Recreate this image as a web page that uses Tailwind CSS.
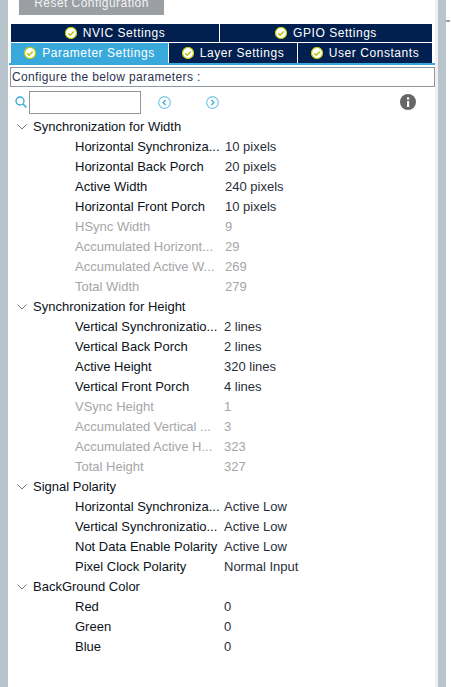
<!DOCTYPE html>
<html lang="en">
<head>
  <meta charset="UTF-8" />
  <title>Parameter Settings</title>
  <script src="https://cdn.jsdelivr.net/npm/@tailwindcss/browser@4"></script>
</head>
<body class="bg-white font-['Liberation_Sans',Arial,sans-serif] text-[13px] text-[#0b1220] overflow-hidden">
<div class="relative w-[452px] h-[687px] overflow-hidden flex">
  <div class="w-2 bg-[#b8c4cb] shrink-0"></div>
  <div class="w-[427px] shrink-0">

    <!-- reset -->
    <div class="ml-[11px] w-[145px] h-[15px] bg-[#9a9fa4] text-[#f2f3f4] text-[12px] tracking-[0.45px] leading-[6px] text-center">Reset Configuration</div>

    <!-- tabs -->
    <div class="mt-[9px] ml-[3px] w-[421px] flex gap-px h-[18px] text-white text-[12px] tracking-[0.55px]">
      <div class="w-[208px] bg-[#012050] flex items-center justify-center gap-[6px]">
        <svg class="w-3 h-3" viewBox="0 0 12 12"><circle cx="6" cy="6" r="5.5" fill="#fff" stroke="#c3cc12" stroke-width="1.2"/><path d="M3.2 6.2l2 2 3.6-3.8" fill="none" stroke="#b8c214" stroke-width="1.5"/></svg>
        <span>NVIC Settings</span>
      </div>
      <div class="flex-1 bg-[#012050] flex items-center justify-center gap-[6px]">
        <svg class="w-3 h-3" viewBox="0 0 12 12"><circle cx="6" cy="6" r="5.5" fill="#fff" stroke="#c3cc12" stroke-width="1.2"/><path d="M3.2 6.2l2 2 3.6-3.8" fill="none" stroke="#b8c214" stroke-width="1.5"/></svg>
        <span>GPIO Settings</span>
      </div>
    </div>
    <div class="mt-px ml-[3px] w-[421px] flex gap-px h-5 text-white text-[12px] tracking-[0.55px]">
      <div class="w-[157px] bg-[#39a9dc] flex items-center justify-center gap-[6px]">
        <svg class="w-3 h-3" viewBox="0 0 12 12"><circle cx="6" cy="6" r="5.5" fill="#fff" stroke="#c3cc12" stroke-width="1.2"/><path d="M3.2 6.2l2 2 3.6-3.8" fill="none" stroke="#b8c214" stroke-width="1.5"/></svg>
        <span>Parameter Settings</span>
      </div>
      <div class="w-[128px] bg-[#012050] flex items-center justify-center gap-[6px]">
        <svg class="w-3 h-3" viewBox="0 0 12 12"><circle cx="6" cy="6" r="5.5" fill="#fff" stroke="#c3cc12" stroke-width="1.2"/><path d="M3.2 6.2l2 2 3.6-3.8" fill="none" stroke="#b8c214" stroke-width="1.5"/></svg>
        <span>Layer Settings</span>
      </div>
      <div class="flex-1 bg-[#012050] flex items-center justify-center gap-[6px]">
        <svg class="w-3 h-3" viewBox="0 0 12 12"><circle cx="6" cy="6" r="5.5" fill="#fff" stroke="#c3cc12" stroke-width="1.2"/><path d="M3.2 6.2l2 2 3.6-3.8" fill="none" stroke="#b8c214" stroke-width="1.5"/></svg>
        <span>User Constants</span>
      </div>
    </div>
    <div class="ml-px w-[428px] h-0.5 bg-[#39a9dc]"></div>

    <!-- caption -->
    <div class="mt-0.5 ml-0.5 w-[425px] h-5 border border-[#8f989e] pl-px text-[12px] tracking-[0.35px] leading-[19px] text-[#2b3350]">Configure the below parameters :</div>

    <!-- search row -->
    <div class="relative h-[23px] mt-[4px] flex items-center">
      <svg class="ml-[7px] w-3 h-3 -mt-px" viewBox="0 0 12 12"><circle cx="5" cy="5" r="4" fill="none" stroke="#39a9dc" stroke-width="1.3"/><path d="M8 8l3.4 3.4" stroke="#39a9dc" stroke-width="1.5"/></svg>
      <div class="ml-[2px] w-[112px] h-[23px] border border-[#8f989e] bg-white"></div>
      <svg class="ml-[17px] w-[13px] h-[13px] -mt-px" viewBox="0 0 13 13"><circle cx="6.5" cy="6.5" r="5.8" fill="none" stroke="#7cc6ea" stroke-width="1.2"/><path d="M7.6 4L5 6.5 7.6 9" fill="none" stroke="#39a9dc" stroke-width="1.2"/></svg>
      <svg class="ml-[35px] w-[13px] h-[13px] -mt-px" viewBox="0 0 13 13"><circle cx="6.5" cy="6.5" r="5.8" fill="none" stroke="#7cc6ea" stroke-width="1.2"/><path d="M5.4 4l2.6 2.5L5.4 9" fill="none" stroke="#39a9dc" stroke-width="1.2"/></svg>
      <svg class="ml-[181px] w-4 h-4 -mt-px" viewBox="0 0 16 16"><circle cx="8" cy="8" r="8" fill="#666"/><rect x="7" y="7" width="2.2" height="6" fill="#fff"/><rect x="7" y="3.4" width="2.2" height="2.2" fill="#fff"/></svg>
    </div>

    <!-- tree -->
    <div class="mt-[3px] leading-5">
      <div class="flex items-center h-5 pl-[9px]"><svg class="w-[10px] h-[6px] mr-[6px]" viewBox="0 0 10 6"><path d="M.5.5L5 5 9.5.5" fill="none" stroke="#777" stroke-width="1"/></svg><span>Synchronization for Width</span></div>
      <div class="flex h-5 pl-[67px]"><span class="w-[150px]">Horizontal Synchroniza...</span><span class="text-[#2a2f3a]">10 pixels</span></div>
      <div class="flex h-5 pl-[67px]"><span class="w-[150px]">Horizontal Back Porch</span><span class="text-[#2a2f3a]">20 pixels</span></div>
      <div class="flex h-5 pl-[67px]"><span class="w-[150px]">Active Width</span><span class="text-[#2a2f3a]">240 pixels</span></div>
      <div class="flex h-5 pl-[67px]"><span class="w-[150px]">Horizontal Front Porch</span><span class="text-[#2a2f3a]">10 pixels</span></div>
      <div class="flex h-5 pl-[67px] text-[#a5a5a8]"><span class="w-[150px]">HSync Width</span><span>9</span></div>
      <div class="flex h-5 pl-[67px] text-[#a5a5a8]"><span class="w-[150px]">Accumulated Horizont...</span><span>29</span></div>
      <div class="flex h-5 pl-[67px] text-[#a5a5a8]"><span class="w-[150px]">Accumulated Active W...</span><span>269</span></div>
      <div class="flex h-5 pl-[67px] text-[#a5a5a8]"><span class="w-[150px]">Total Width</span><span>279</span></div>

      <div class="flex items-center h-5 pl-[9px]"><svg class="w-[10px] h-[6px] mr-[6px]" viewBox="0 0 10 6"><path d="M.5.5L5 5 9.5.5" fill="none" stroke="#777" stroke-width="1"/></svg><span>Synchronization for Height</span></div>
      <div class="flex h-5 pl-[67px]"><span class="w-[149px]">Vertical Synchronizatio...</span><span class="text-[#2a2f3a]">2 lines</span></div>
      <div class="flex h-5 pl-[67px]"><span class="w-[149px]">Vertical Back Porch</span><span class="text-[#2a2f3a]">2 lines</span></div>
      <div class="flex h-5 pl-[67px]"><span class="w-[149px]">Active Height</span><span class="text-[#2a2f3a]">320 lines</span></div>
      <div class="flex h-5 pl-[67px]"><span class="w-[149px]">Vertical Front Porch</span><span class="text-[#2a2f3a]">4 lines</span></div>
      <div class="flex h-5 pl-[67px] text-[#a5a5a8]"><span class="w-[149px]">VSync Height</span><span>1</span></div>
      <div class="flex h-5 pl-[67px] text-[#a5a5a8]"><span class="w-[149px]">Accumulated Vertical ...</span><span>3</span></div>
      <div class="flex h-5 pl-[67px] text-[#a5a5a8]"><span class="w-[149px]">Accumulated Active H...</span><span>323</span></div>
      <div class="flex h-5 pl-[67px] text-[#a5a5a8]"><span class="w-[149px]">Total Height</span><span>327</span></div>

      <div class="flex items-center h-5 pl-[9px]"><svg class="w-[10px] h-[6px] mr-[6px]" viewBox="0 0 10 6"><path d="M.5.5L5 5 9.5.5" fill="none" stroke="#777" stroke-width="1"/></svg><span>Signal Polarity</span></div>
      <div class="flex h-5 pl-[67px]"><span class="w-[149px]">Horizontal Synchroniza...</span><span class="text-[#2a2f3a]">Active Low</span></div>
      <div class="flex h-5 pl-[67px]"><span class="w-[149px]">Vertical Synchronizatio...</span><span class="text-[#2a2f3a]">Active Low</span></div>
      <div class="flex h-5 pl-[67px]"><span class="w-[149px]">Not Data Enable Polarity</span><span class="text-[#2a2f3a]">Active Low</span></div>
      <div class="flex h-5 pl-[67px]"><span class="w-[149px]">Pixel Clock Polarity</span><span class="text-[#2a2f3a]">Normal Input</span></div>

      <div class="flex items-center h-5 pl-[9px]"><svg class="w-[10px] h-[6px] mr-[6px]" viewBox="0 0 10 6"><path d="M.5.5L5 5 9.5.5" fill="none" stroke="#777" stroke-width="1"/></svg><span>BackGround Color</span></div>
      <div class="flex h-5 pl-[67px]"><span class="w-[149px]">Red</span><span class="text-[#2a2f3a]">0</span></div>
      <div class="flex h-5 pl-[67px]"><span class="w-[149px]">Green</span><span class="text-[#2a2f3a]">0</span></div>
      <div class="flex h-5 pl-[67px]"><span class="w-[149px]">Blue</span><span class="text-[#2a2f3a]">0</span></div>
    </div>
  </div>

  <!-- right edge -->
  <div class="w-[3px] bg-[#eef0f1] shrink-0"></div>
  <div class="w-2 bg-[#b8c4cb] shrink-0"></div>
  <div class="flex-1 pt-5"><div class="w-1 h-0.5 bg-[#9aa0a6]"></div></div>
</div>
</body>
</html>
